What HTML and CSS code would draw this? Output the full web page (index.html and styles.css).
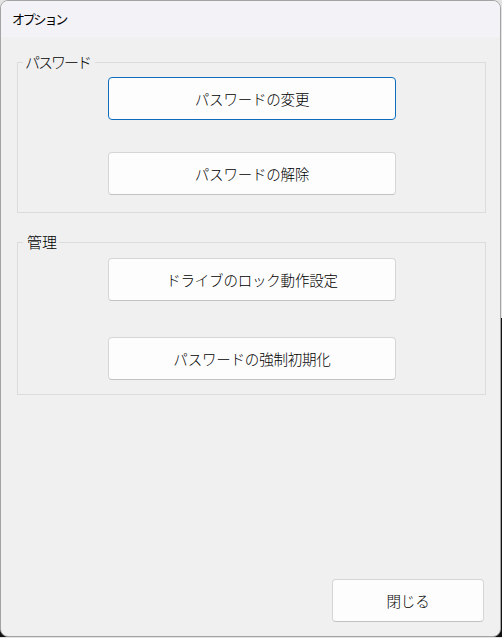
FILE: index.html
```html
<!DOCTYPE html>
<html lang="ja">
<head>
<meta charset="utf-8">
<title>オプション</title>
<link rel="stylesheet" href="styles.css">
</head>
<body>
<div class="window">
  <div class="titlebar">オプション</div>
  <div class="client">
    <fieldset class="group group-password">
      <legend class="group-label group-label-kana">パスワード</legend>
      <button class="btn btn-focus">パスワードの変更</button>
      <button class="btn btn-second">パスワードの解除</button>
    </fieldset>
    <fieldset class="group group-admin">
      <legend class="group-label">管理</legend>
      <button class="btn">ドライブのロック動作設定</button>
      <button class="btn btn-second">パスワードの強制初期化</button>
    </fieldset>
    <div class="footer">
      <button class="btn btn-close">閉じる</button>
    </div>
  </div>
</div>
</body>
</html>
```
FILE: styles.css
```css
html {
  background: linear-gradient(#e4e4e4 0, #e4e4e4 50%, #111 50%, #111 100%);
}
body {
  margin: 0;
  font-family: "Noto Sans CJK JP", "Noto Sans", sans-serif;
  font-weight: 300;
  color: #000;
}
.window {
  box-sizing: border-box;
  width: 501px;
  height: 637px;
  border: 1px solid #a3a3a3;
  border-radius: 8px;
  background: #f0f0f0;
  overflow: hidden;
  display: flex;
  flex-direction: column;
}
.titlebar {
  height: 36px;
  line-height: 36px;
  padding-left: 11px;
  font-size: 13px;
  font-weight: 400;
  letter-spacing: -2.2px;
  background: #f2f2f7;
  flex: none;
}
.client {
  flex: 1;
  display: flex;
  flex-direction: column;
  padding: 15px 0 14px 16px;
}
.group {
  box-sizing: border-box;
  width: 469px;
  margin: 0;
  padding: 5px 0 17px 5px;
  border: 1px solid #dcdcdc;
  min-width: 0;
}
.group-admin {
  margin-top: 19px;
  padding-top: 6px;
  padding-bottom: 14px;
}
.group-label {
  padding: 0 2px;
  font-size: 15px;
  line-height: 20px;
  font-weight: 300;
}
.group-label-kana {
  letter-spacing: -2px;
  padding-right: 5px;
}
.group-admin .group-label {
  padding-left: 4px;
}
.btn {
  display: block;
  box-sizing: border-box;
  width: 288px;
  height: 43px;
  margin: 0 0 0 85px;
  padding: 0;
  background: #fdfdfd;
  border: 1px solid #d6d6d6;
  border-bottom-color: #c2c2c2;
  border-radius: 4px;
  font-family: inherit;
  font-weight: 300;
  font-size: 14.5px;
  letter-spacing: -0.2px;
  color: #000;
}
.btn-focus {
  border-color: #0f6cbd;
}
.group-password .btn-second {
  margin-top: 32px;
}
.group-admin .btn-second {
  margin-top: 36px;
}
.footer {
  margin-top: auto;
  display: flex;
  justify-content: flex-end;
  padding-right: 16px;
}
.btn-close {
  width: 152px;
  margin: 0;
}
```
